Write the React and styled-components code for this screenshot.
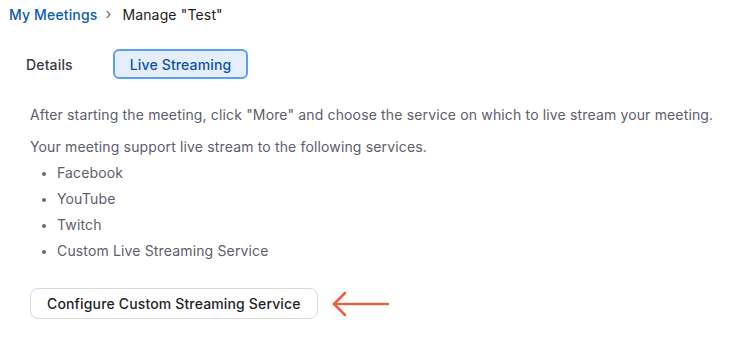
import React from "react";
import styled, { createGlobalStyle } from "styled-components";

const Global = createGlobalStyle`
  html, body { margin: 0; padding: 0; background: #fff; }
  body { font-family: Inter, "Noto Sans", sans-serif; -webkit-font-smoothing: antialiased; }
`;

const Page = styled.div`
  width: 742px;
  height: 340px;
  box-sizing: border-box;
  padding: 6px 0 0 9px;
  letter-spacing: 0.15px;
`;

const Breadcrumb = styled.nav`
  display: flex;
  align-items: center;
  font-size: 14px;
  line-height: 18px;
`;

const Crumb = styled.a`
  color: ${(p) => (p.$link ? "#0b5cad" : "#1d1d22")};
  font-weight: ${(p) => (p.$link ? 500 : 400)};
  text-decoration: none;
`;

const Sep = styled.span`
  color: #6a6a74;
  font-size: 15px;
  margin: -2px 11px 0 8px;
`;

const Tabs = styled.div`
  display: flex;
  align-items: center;
  margin-top: 25px;
  margin-left: 3px;
`;

const Tab = styled.button`
  font-family: inherit;
  letter-spacing: inherit;
  font-size: 14px;
  font-weight: 500;
  height: 30px;
  box-sizing: border-box;
  padding: 0 ${(p) => (p.$active ? "15px" : "12px")};
  border-radius: 6px;
  border: 2px solid ${(p) => (p.$active ? "#5b9ff0" : "transparent")};
  background: ${(p) => (p.$active ? "#e5effc" : "transparent")};
  color: ${(p) => (p.$active ? "#0b4fb4" : "#3a3a44")};
  cursor: pointer;
  margin-right: ${(p) => (p.$active ? "0" : "26px")};
`;

const Content = styled.div`
  padding: 27px 0 0 21px;
  color: #5d5d6c;
  font-size: 14px;
  line-height: 18px;
`;

const Para = styled.p`
  margin: 0 0 ${(p) => p.$mb || 0}px 0;
`;

const List = styled.ul`
  margin: 0;
  padding: 0 0 0 27px;
  list-style: disc;
  & li {
    line-height: 18px;
    margin-top: 8px;
  }
  & li::marker { font-size: 13px; color: #6a6a76; }
`;

const ActionRow = styled.div`
  display: flex;
  align-items: center;
  gap: 14px;
  margin-top: 28px;
`;

const Button = styled.button`
  font-family: inherit;
  letter-spacing: inherit;
  font-size: 14px;
  font-weight: 500;
  color: #1f1f26;
  height: 31px;
  box-sizing: border-box;
  padding: 0 16px;
  background: #fff;
  border: 1px solid #d9d9e0;
  border-radius: 8px;
  cursor: pointer;
`;

const Arrow = () => (
  <svg width="57" height="26" viewBox="0 0 57 26" fill="none">
    <path d="M56 13H2" stroke="#e9604a" strokeWidth="2.6" strokeLinecap="round" />
    <path d="M13 2L2 13l11 11" stroke="#e9604a" strokeWidth="2.6" strokeLinecap="round" strokeLinejoin="round" />
  </svg>
);

export default function App() {
  return (
    <Page>
      <Global />
      <Breadcrumb>
        <Crumb $link href="#">My Meetings</Crumb>
        <Sep>›</Sep>
        <Crumb>Manage "Test"</Crumb>
      </Breadcrumb>
      <Tabs>
        <Tab>Details</Tab>
        <Tab $active>Live Streaming</Tab>
      </Tabs>
      <Content>
        <Para $mb={14}>
          After starting the meeting, click "More" and choose the service on which to live stream your meeting.
        </Para>
        <Para>Your meeting support live stream to the following services.</Para>
        <List>
          <li>Facebook</li>
          <li>YouTube</li>
          <li>Twitch</li>
          <li>Custom Live Streaming Service</li>
        </List>
        <ActionRow>
          <Button>Configure Custom Streaming Service</Button>
          <Arrow />
        </ActionRow>
      </Content>
    </Page>
  );
}
